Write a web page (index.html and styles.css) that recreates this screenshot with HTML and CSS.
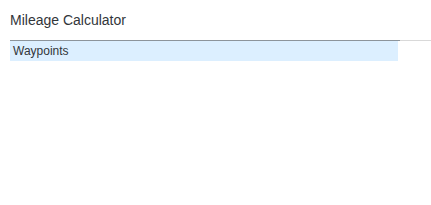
FILE: index.html
```html
<!DOCTYPE html>
<html lang="en">
<head>
    <meta charset="UTF-8">
    <meta name="viewport" content="width=device-width, initial-scale=1.0">
    <title>Mileage Calculator</title>
    <link rel="stylesheet" href="styles.css">
</head>
<body>
    <div class="page">
        <div class="page-header">
            <h1 class="page-title">Mileage Calculator</h1>
        </div>
        <div class="section">
            <div class="section-bar"></div>
            <div class="table-header">Waypoints</div>
        </div>
    </div>
</body>
</html>
```

FILE: styles.css
```css
body {
    font-family: "Liberation Sans", Arial, sans-serif;
    margin: 0;
    background-color: #ffffff;
    color: #32363a;
}
.page {
    padding-left: 10px;
}
.page-header {
    height: 40px;
    display: flex;
    align-items: center;
}
.page-title {
    margin: 0;
    font-size: 14px;
    font-weight: normal;
    color: #32363a;
}
.section {
    position: relative;
}
.section-bar {
    height: 1px;
    background: linear-gradient(to right, #8c949b 0, #8c949b 390px, #d9d9d9 390px);
}
.table-header {
    width: 385px;
    height: 20px;
    line-height: 20px;
    padding-left: 3px;
    font-size: 12px;
    background-color: #dcefff;
}
```
